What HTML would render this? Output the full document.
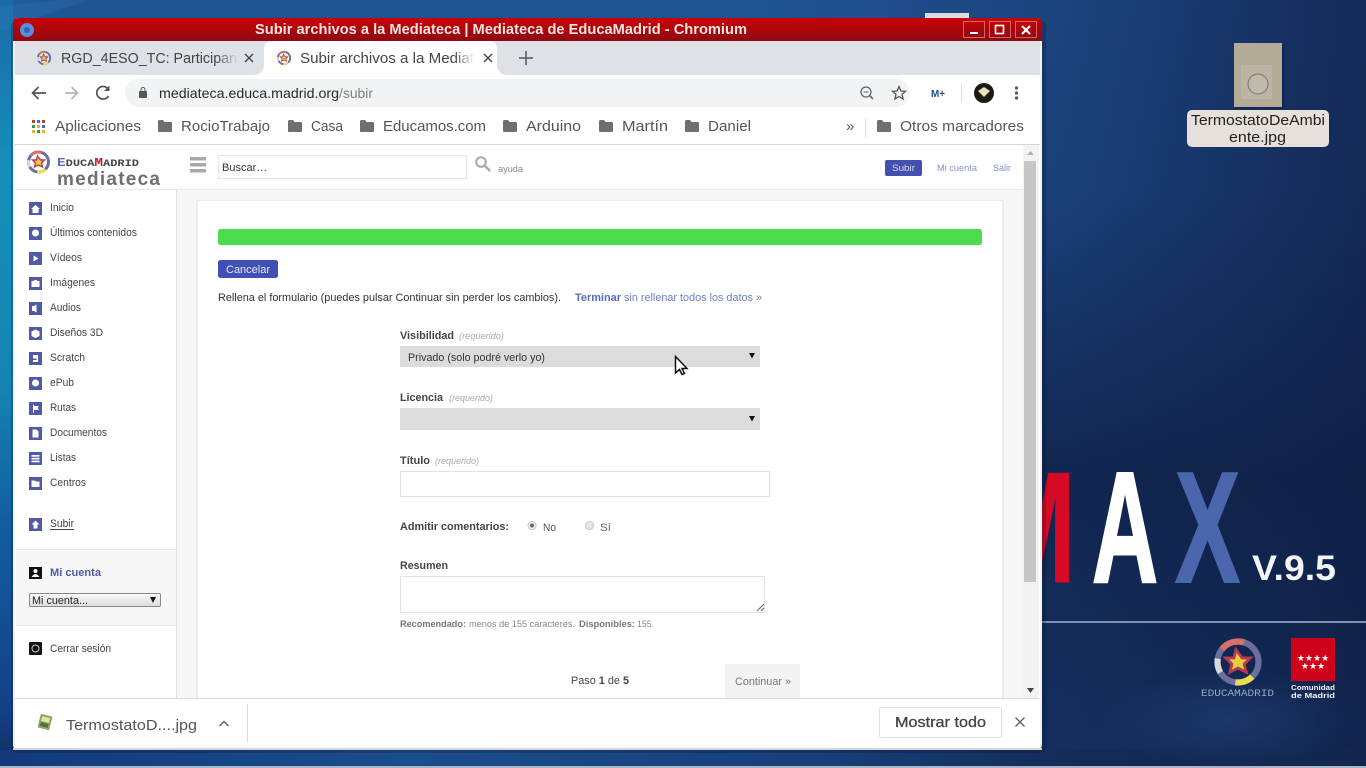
<!DOCTYPE html>
<html lang="es"><head><meta charset="utf-8"><title>Subir archivos a la Mediateca</title>
<style>
html,body{margin:0;padding:0;width:1366px;height:768px;overflow:hidden;background:#14305f}
svg{display:block;filter:blur(.3px)}
text{font-family:"Liberation Sans",sans-serif}
.u{font-size:15px;fill:#555}
.s{font-size:11px;fill:#444}
.f{font-size:11px;fill:#333}
.b{font-weight:bold;fill:#444}
.r{font-size:9.5px;font-style:italic;fill:#aaa}
.n{font-size:9.5px;fill:#888}
</style></head><body>
<svg width="1366" height="768" viewBox="0 0 1366 768" xmlns="http://www.w3.org/2000/svg">
<defs>
<linearGradient id="bg" x1="0" y1="0" x2="1" y2="0"><stop offset="0" stop-color="#1d5f9f"/><stop offset=".05" stop-color="#1f5493"/><stop offset=".55" stop-color="#1f5492"/><stop offset=".78" stop-color="#1c437e"/><stop offset="1" stop-color="#142a58"/></linearGradient>
<linearGradient id="rt" x1="0" y1="0" x2="0" y2="1"><stop offset="0" stop-color="#0e1f44" stop-opacity="0"/><stop offset=".25" stop-color="#0e1f44" stop-opacity=".1"/><stop offset=".62" stop-color="#0e1f44" stop-opacity=".8"/><stop offset="1" stop-color="#0e1f44" stop-opacity=".55"/></linearGradient>
<linearGradient id="lf" x1="0" y1="0" x2="0" y2="1"><stop offset="0" stop-color="#1a6aa8"/><stop offset=".22" stop-color="#1590ba"/><stop offset=".5" stop-color="#1584b2"/><stop offset=".68" stop-color="#125ea0"/><stop offset=".93" stop-color="#143f85"/><stop offset="1" stop-color="#102c5e"/></linearGradient>
<linearGradient id="bt" x1="0" y1="0" x2="1" y2="0"><stop offset="0" stop-color="#123a7a"/><stop offset=".3" stop-color="#1b4e8c"/><stop offset=".6" stop-color="#173f78"/><stop offset=".8" stop-color="#132a55"/><stop offset="1" stop-color="#12264d"/></linearGradient>
<radialGradient id="gl" cx=".5" cy=".5" r=".5"><stop offset="0" stop-color="#24477f" stop-opacity=".5"/><stop offset="1" stop-color="#24477f" stop-opacity="0"/></radialGradient>
<linearGradient id="tt" x1="0" y1="0" x2="0" y2="1"><stop offset="0" stop-color="#cc0006"/><stop offset="1" stop-color="#8e0a12"/></linearGradient>
<linearGradient id="fa" x1="0" y1="0" x2="1" y2="0"><stop offset="0" stop-color="#dee1e6" stop-opacity="0"/><stop offset="1" stop-color="#dee1e6"/></linearGradient>
<linearGradient id="fb" x1="0" y1="0" x2="1" y2="0"><stop offset="0" stop-color="#fff" stop-opacity="0"/><stop offset="1" stop-color="#fff"/></linearGradient>
<linearGradient id="sl" x1="0" y1="0" x2="0" y2="1"><stop offset="0" stop-color="#fafafa"/><stop offset="1" stop-color="#dcdcdc"/></linearGradient>
<g id="ring" fill="none">
<circle r="10" stroke="#6a6f9c" stroke-width="3"/>
<circle r="10" stroke="#e8dc50" stroke-width="3" stroke-dasharray="9 54" stroke-dashoffset="-8"/>
<circle r="10" stroke="#d87068" stroke-width="3" stroke-dasharray="12 51" stroke-dashoffset="-38"/>
<circle r="10" stroke="#d8d8e0" stroke-width="3" stroke-dasharray="7 56" stroke-dashoffset="-26"/>
<path d="M-1-6 2-2 6-2 3 1 4 5 0 3-4 5-3 1-6-2-2-2Z" fill="#e8cf40" stroke="#b53a52" stroke-width="1.4"/>
</g>
<g id="fd"><path d="M0 1.500Q0 0 1.500 0H5L6.500 2H13Q14 2 14 3V11Q14 12 13 12H1Q0 12 0 11Z" fill="#6f6f6f"/></g>
</defs>

<!-- desktop -->
<rect width="1366" height="768" fill="url(#bg)"/>
<rect x="1042" y="0" width="324" height="768" fill="url(#rt)"/>
<rect x="0" y="0" width="13" height="768" fill="url(#lf)"/>
<rect x="0" y="750" width="1366" height="16" fill="url(#bt)"/>
<rect x="0" y="766" width="1366" height="2" fill="#aab5c8"/>
<ellipse cx="1230" cy="720" rx="130" ry="50" fill="url(#gl)"/>
<path d="M0 6 60 0H90L0 30Z" fill="#3d83bd" opacity=".2"/>
<rect x="925" y="13" width="44" height="6" fill="#d9dde5"/>

<!-- wallpaper MAX -->
<text x="988" y="582" font-size="158" font-weight="bold" fill="#d60a24" stroke="#d60a24" stroke-width="1" textLength="88" lengthAdjust="spacingAndGlyphs">M</text>
<text x="1092" y="582" font-size="158" font-weight="bold" fill="#fff" stroke="#fff" stroke-width="2.500" textLength="66" lengthAdjust="spacingAndGlyphs">A</text>
<text x="1175" y="582" font-size="158" font-weight="bold" fill="#4a66ad" stroke="#4a66ad" stroke-width="2" textLength="65" lengthAdjust="spacingAndGlyphs">X</text>
<text x="1252" y="580" font-size="35" font-weight="bold" fill="#f2f4f8" textLength="84" lengthAdjust="spacingAndGlyphs">V.9.5</text>
<rect x="1042" y="621" width="324" height="2" fill="#7f90b2"/>
<use href="#ring" transform="translate(1238 662) scale(2.05)"/>
<text x="1201" y="696" font-size="10" fill="#9aa6c2" textLength="73" lengthAdjust="spacingAndGlyphs" style="font-family:'Liberation Mono',monospace">EDUCAMADRID</text>
<rect x="1291" y="638" width="44" height="43" fill="#d0021b"/>
<text x="1313" y="661" font-size="9" fill="#fff" text-anchor="middle">★★★★</text>
<text x="1313" y="669" font-size="9" fill="#fff" text-anchor="middle">★★★</text>
<text x="1291" y="690" font-size="7.500" font-weight="bold" fill="#f2f4f8" textLength="44" lengthAdjust="spacingAndGlyphs">Comunidad</text>
<text x="1291" y="698" font-size="7.500" font-weight="bold" fill="#f2f4f8" textLength="44" lengthAdjust="spacingAndGlyphs">de Madrid</text>

<!-- desktop file -->
<rect x="1236" y="45" width="48" height="64" fill="#0b1c3b" opacity=".5"/>
<rect x="1234" y="43" width="48" height="64" fill="#b3ab98"/>
<rect x="1241" y="65" width="31" height="34" fill="#bcb5a6"/>
<circle cx="1258" cy="84" r="10" fill="#c0baae" stroke="#77736a"/>
<rect x="1187" y="110" width="142" height="37" rx="5" fill="#e6e0dc"/>
<text x="1191" y="125" font-size="14.500" fill="#222" textLength="134" lengthAdjust="spacingAndGlyphs">TermostatoDeAmbi</text>
<text x="1229" y="142" font-size="14.500" fill="#222" textLength="57" lengthAdjust="spacingAndGlyphs">ente.jpg</text>

<!-- window -->
<rect x="11" y="20" width="1035" height="733" rx="6" fill="#04132c" opacity=".25"/>
<rect x="13" y="18" width="1029" height="732" rx="5" fill="#f4f2f0"/>
<path d="M13 41V23Q13 18 18 18H1037Q1042 18 1042 23V41Z" fill="url(#tt)"/>
<circle cx="27" cy="30" r="7" fill="#5a8fd8"/><circle cx="27" cy="30" r="3" fill="#2f66b8"/>
<text x="255" y="34" font-size="14.500" font-weight="bold" fill="#f3e5df" textLength="492" lengthAdjust="spacingAndGlyphs">Subir archivos a la Mediateca | Mediateca de EducaMadrid - Chromium</text>
<g fill="none" stroke="#c86a6a"><rect x="963.500" y="21.500" width="21" height="16"/><rect x="989.500" y="21.500" width="21" height="16"/><rect x="1015.500" y="21.500" width="21" height="16"/></g>
<rect x="970" y="32" width="8" height="2" fill="#fff"/>
<rect x="995.500" y="25.500" width="8" height="8" fill="none" stroke="#fff" stroke-width="1.600"/>
<path d="M1022 26 1030 34M1030 26 1022 34" stroke="#fff" stroke-width="2.200"/>

<!-- tabs -->
<rect x="15" y="41" width="1025" height="34" fill="#dee1e6"/>
<path d="M254 75Q262 75 264 66V50Q264 41 272 41H489Q497 41 497 50V66Q499 75 507 75Z" fill="#fff"/>
<use href="#ring" transform="translate(44 58) scale(.62)"/>
<text x="61" y="63" font-size="14.500" fill="#444" textLength="176" lengthAdjust="spacingAndGlyphs">RGD_4ESO_TC: Participan</text>
<rect x="216" y="46" width="22" height="24" fill="url(#fa)"/>
<path d="M245 54 253 62M253 54 245 62" stroke="#444" stroke-width="1.400"/>
<use href="#ring" transform="translate(284 58) scale(.62)"/>
<text x="300" y="63" font-size="14.500" fill="#444" textLength="174" lengthAdjust="spacingAndGlyphs">Subir archivos a la Mediat</text>
<rect x="454" y="46" width="20" height="24" fill="url(#fb)"/>
<path d="M484 54 492 62M492 54 484 62" stroke="#444" stroke-width="1.400"/>
<path d="M526 51V65M519 58H533" stroke="#555" stroke-width="1.500"/>

<!-- toolbar -->
<rect x="15" y="75" width="1025" height="70" fill="#fff"/>
<rect x="125" y="79" width="785" height="28" rx="14" fill="#f1f3f4"/>
<path d="M46 93H33M38.500 87 32.500 93 38.500 99" fill="none" stroke="#555" stroke-width="1.700"/>
<path d="M78 93H65M71.500 87 77.500 93 71.500 99" fill="none" stroke="#b5b5b5" stroke-width="1.700"/>
<path d="M108.500 96A6.300 6.300 0 1 1 108.500 89.500" fill="none" stroke="#555" stroke-width="1.700"/><path d="M109.500 85.500V91H104Z" fill="#555"/>
<rect x="139" y="91" width="8" height="7" rx="1" fill="#555"/><path d="M141 91V89.500A2 2 0 0 1 145 89.500V91" fill="none" stroke="#555"/>
<text x="159" y="98" font-size="14" fill="#2a2a2a" textLength="180" lengthAdjust="spacingAndGlyphs">mediateca.educa.madrid.org</text>
<text x="339" y="98" font-size="14" fill="#808080" textLength="34" lengthAdjust="spacingAndGlyphs">/subir</text>
<circle cx="866" cy="92" r="5" fill="none" stroke="#666" stroke-width="1.300"/><path d="M870 96 873 99" stroke="#666" stroke-width="1.600"/><path d="M863.500 92H868.500" stroke="#666"/>
<path d="M899 86.500 900.900 91 905.500 91.300 902 94.300 903.100 99 899 96.500 894.900 99 896 94.300 892.500 91.300 897.100 91Z" fill="none" stroke="#555" stroke-width="1.300"/>
<text x="931" y="97" font-size="10" font-weight="bold" fill="#1c4f8a" textLength="14" lengthAdjust="spacingAndGlyphs">M+</text>
<rect x="961" y="84" width="1" height="18" fill="#dfe1e5"/>
<circle cx="984" cy="93" r="10" fill="#1b1a14"/><path d="M978 91 984 87 990 91 984 97Z" fill="#e6e2b8"/>
<g fill="#555"><circle cx="1016.500" cy="88" r="1.600"/><circle cx="1016.500" cy="93" r="1.600"/><circle cx="1016.500" cy="98" r="1.600"/></g>

<!-- bookmarks -->
<g><rect x="32" y="120" width="3" height="3" fill="#c5392f"/><rect x="37" y="120" width="3" height="3" fill="#3a6fd8"/><rect x="42" y="120" width="3" height="3" fill="#c5392f"/><rect x="32" y="125" width="3" height="3" fill="#2e9e4a"/><rect x="37" y="125" width="3" height="3" fill="#e5b820"/><rect x="42" y="125" width="3" height="3" fill="#3a6fd8"/><rect x="32" y="130" width="3" height="3" fill="#e5b820"/><rect x="37" y="130" width="3" height="3" fill="#2e9e4a"/><rect x="42" y="130" width="3" height="3" fill="#e5b820"/></g>
<text class="u" x="55" y="131" textLength="86" lengthAdjust="spacingAndGlyphs">Aplicaciones</text>
<use href="#fd" x="158" y="120"/><text class="u" x="181" y="131" textLength="89" lengthAdjust="spacingAndGlyphs">RocioTrabajo</text>
<use href="#fd" x="288" y="120"/><text class="u" x="311" y="131" textLength="32" lengthAdjust="spacingAndGlyphs">Casa</text>
<use href="#fd" x="360" y="120"/><text class="u" x="383" y="131" textLength="103" lengthAdjust="spacingAndGlyphs">Educamos.com</text>
<use href="#fd" x="503" y="120"/><text class="u" x="526" y="131" textLength="55" lengthAdjust="spacingAndGlyphs">Arduino</text>
<use href="#fd" x="599" y="120"/><text class="u" x="622" y="131" textLength="46" lengthAdjust="spacingAndGlyphs">Martín</text>
<use href="#fd" x="685" y="120"/><text class="u" x="708" y="131" textLength="43" lengthAdjust="spacingAndGlyphs">Daniel</text>
<text x="846" y="131" font-size="15" fill="#555">»</text>
<rect x="865" y="119" width="1" height="18" fill="#dfe1e5"/>
<use href="#fd" x="877" y="120"/><text class="u" x="900" y="131" textLength="124" lengthAdjust="spacingAndGlyphs">Otros marcadores</text>
<rect x="15" y="144" width="1025" height="1" fill="#d4d6da"/>

<!-- page -->
<rect x="15" y="145" width="1025" height="553" fill="#fff"/>
<rect x="15" y="189" width="1008" height="1" fill="#e8e8e8"/>
<rect x="177" y="190" width="846" height="508" fill="#f6f6f6"/>
<rect x="176" y="190" width="1" height="508" fill="#e3e3e3"/>
<rect x="196" y="200" width="808" height="498" fill="#ececec"/>
<rect x="198" y="201" width="804" height="497" fill="#fff"/>
<rect x="1023" y="145" width="16" height="553" fill="#f3f3f3"/>
<rect x="1024" y="161" width="12" height="421" fill="#c6c6c6"/>
<path d="M1027 155 1030.500 151 1034 155Z" fill="#b0b0b0"/><path d="M1027 688 1030.500 693 1034 688Z" fill="#444"/>

<!-- header -->
<use href="#ring" transform="translate(38.500 162) scale(1)"/>
<text x="57" y="166" font-size="10" fill="#444" font-weight="bold" textLength="82" lengthAdjust="spacingAndGlyphs" style="font-family:'Liberation Mono',monospace"><tspan fill="#5a6bc0" font-size="12">E</tspan>DUCA<tspan fill="#c5182f" font-size="12">M</tspan>ADRID</text>
<text x="57" y="185" font-size="19" font-weight="bold" fill="#707070" textLength="103" lengthAdjust="spacing">mediateca</text>
<g fill="#a8a8a8"><rect x="190" y="157" width="16" height="3.500"/><rect x="190" y="163" width="16" height="3.500"/><rect x="190" y="169" width="16" height="3.500"/></g>
<rect x="218.500" y="155.500" width="248" height="23" fill="#fff" stroke="#e6e6e6"/>
<text x="222" y="171" font-size="11" fill="#333">Buscar…</text>
<circle cx="481" cy="162" r="4.800" fill="none" stroke="#a9a9a9" stroke-width="2"/><path d="M485 166 490 171" stroke="#a9a9a9" stroke-width="2.500"/>
<text x="498" y="172" font-size="9.500" fill="#888" textLength="25" lengthAdjust="spacingAndGlyphs">ayuda</text>
<rect x="885" y="160" width="37" height="16" rx="2" fill="#4450b0"/>
<text x="892" y="171" font-size="9.500" fill="#d8dcf4" textLength="23" lengthAdjust="spacingAndGlyphs">Subir</text>
<text x="937" y="171" font-size="9.500" fill="#8a90cc" textLength="40" lengthAdjust="spacingAndGlyphs">Mi cuenta</text>
<text x="993" y="171" font-size="9.500" fill="#8a90cc" textLength="18" lengthAdjust="spacingAndGlyphs">Salir</text>

<!-- sidebar -->
<g fill="#4f5aa6">
<rect x="29" y="202" width="13" height="13"/><rect x="29" y="227" width="13" height="13"/><rect x="29" y="252" width="13" height="13"/><rect x="29" y="277" width="13" height="13"/><rect x="29" y="302" width="13" height="13"/><rect x="29" y="327" width="13" height="13"/><rect x="29" y="352" width="13" height="13"/><rect x="29" y="377" width="13" height="13"/><rect x="29" y="402" width="13" height="13"/><rect x="29" y="427" width="13" height="13"/><rect x="29" y="452" width="13" height="13"/><rect x="29" y="477" width="13" height="13"/><rect x="29" y="518" width="13" height="13"/>
</g>
<g fill="#fff">
<path d="M35.500 205 40 209H38.500V213H32.500V209H31Z"/>
<circle cx="35.500" cy="233" r="3.500"/>
<path d="M33.500 255.500 38.500 258.500 33.500 261.500Z"/>
<path d="M31.500 281H33.500L34.500 280H36.500L37.500 281H39.500V287H31.500Z"/>
<path d="M32 306H34L36.500 304.500V312.500L34 311H32Z"/>
<path d="M35.500 329.500 39.500 331.500V336L35.500 338 31.500 336V331.500Z"/>
<path d="M33 355H38V362H33V360H36.500V358.500H33Z"/>
<circle cx="35.500" cy="383" r="3.500"/>
<path d="M33 404.500H34V406H39L37.500 408 39 410H34V413H33Z"/>
<path d="M32.500 429.500H36.500L38.500 431.500V437.500H32.500Z"/>
<rect x="31.500" y="455" width="8" height="1.700"/><rect x="31.500" y="457.800" width="8" height="1.700"/><rect x="31.500" y="460.600" width="8" height="1.700"/>
<path d="M31.500 480.500H35L36 481.500H39.500V487H31.500Z"/>
<path d="M35.500 520.500 39.500 524.500H37.500V528.500H33.500V524.500H31.500Z"/>
</g>
<text class="s" x="50" y="211" textLength="24" lengthAdjust="spacingAndGlyphs">Inicio</text>
<text class="s" x="50" y="236" textLength="87" lengthAdjust="spacingAndGlyphs">Últimos contenidos</text>
<text class="s" x="50" y="261" textLength="32" lengthAdjust="spacingAndGlyphs">Vídeos</text>
<text class="s" x="50" y="286" textLength="45" lengthAdjust="spacingAndGlyphs">Imágenes</text>
<text class="s" x="50" y="311" textLength="31" lengthAdjust="spacingAndGlyphs">Audios</text>
<text class="s" x="50" y="336" textLength="53" lengthAdjust="spacingAndGlyphs">Diseños 3D</text>
<text class="s" x="50" y="361" textLength="35" lengthAdjust="spacingAndGlyphs">Scratch</text>
<text class="s" x="50" y="386" textLength="24" lengthAdjust="spacingAndGlyphs">ePub</text>
<text class="s" x="50" y="411" textLength="26" lengthAdjust="spacingAndGlyphs">Rutas</text>
<text class="s" x="50" y="436" textLength="57" lengthAdjust="spacingAndGlyphs">Documentos</text>
<text class="s" x="50" y="461" textLength="26" lengthAdjust="spacingAndGlyphs">Listas</text>
<text class="s" x="50" y="486" textLength="36" lengthAdjust="spacingAndGlyphs">Centros</text>
<text class="s" x="50" y="527" textLength="24" lengthAdjust="spacingAndGlyphs">Subir</text>
<rect x="50" y="529" width="24" height="1" fill="#444"/>
<rect x="16" y="549" width="160" height="77" fill="#f7f7f7"/>
<rect x="16" y="549" width="160" height="1" fill="#e6e6e6"/><rect x="16" y="625" width="160" height="1" fill="#e6e6e6"/>
<rect x="29" y="567" width="13" height="12" fill="#111"/><circle cx="35.500" cy="571" r="2" fill="#fff"/><path d="M31.500 577Q35.500 571 39.500 577Z" fill="#fff"/>
<text x="50" y="576" font-size="11" font-weight="bold" fill="#4f5aa6" textLength="51" lengthAdjust="spacingAndGlyphs">Mi cuenta</text>
<rect x="29.500" y="593.500" width="131" height="13" rx="1.500" fill="url(#sl)" stroke="#8a8a8a"/>
<text x="32" y="604" font-size="11" fill="#222" textLength="56" lengthAdjust="spacingAndGlyphs">Mi cuenta...</text>
<path d="M150 597H156L153 603Z" fill="#111"/>
<rect x="29" y="642" width="13" height="13" rx="1" fill="#111"/><circle cx="35.500" cy="648.500" r="3.500" fill="none" stroke="#ccc"/>
<text class="s" x="50" y="652" textLength="61" lengthAdjust="spacingAndGlyphs">Cerrar sesión</text>

<!-- content -->
<rect x="218" y="229" width="764" height="16" rx="2.500" fill="#4cdb4c"/>
<rect x="218" y="260" width="60" height="18" rx="2.500" fill="#4150b4"/>
<text x="226" y="273" font-size="11" fill="#e6e9f8" textLength="44" lengthAdjust="spacingAndGlyphs">Cancelar</text>
<text class="f" x="218" y="301" textLength="343" lengthAdjust="spacingAndGlyphs">Rellena el formulario (puedes pulsar Continuar sin perder los cambios).</text>
<text x="575" y="301" font-size="11" font-weight="bold" fill="#5a6bc0" textLength="46" lengthAdjust="spacingAndGlyphs">Terminar</text>
<text x="624" y="301" font-size="11" fill="#6f7cc8" textLength="138" lengthAdjust="spacingAndGlyphs">sin rellenar todos los datos »</text>

<text class="f b" x="400" y="339" textLength="54" lengthAdjust="spacingAndGlyphs">Visibilidad</text>
<text class="r" x="459" y="339" textLength="45" lengthAdjust="spacingAndGlyphs">(requerido)</text>
<rect x="400" y="346" width="360" height="21" fill="#dcdcdc"/>
<text x="408" y="361" font-size="11" fill="#333" textLength="137" lengthAdjust="spacingAndGlyphs">Privado (solo podré verlo yo)</text>
<path d="M749 353H755L752 358.500Z" fill="#111"/>

<text class="f b" x="400" y="401" textLength="43" lengthAdjust="spacingAndGlyphs">Licencia</text>
<text class="r" x="449" y="401" textLength="44" lengthAdjust="spacingAndGlyphs">(requerido)</text>
<rect x="400" y="408" width="360" height="22" fill="#dcdcdc"/>
<path d="M749 416H755L752 421.500Z" fill="#111"/>

<text class="f b" x="400" y="464" textLength="30" lengthAdjust="spacingAndGlyphs">Título</text>
<text class="r" x="435" y="464" textLength="44" lengthAdjust="spacingAndGlyphs">(requerido)</text>
<rect x="400.500" y="471.500" width="369" height="25" fill="#fff" stroke="#e2e2e2"/>

<text class="f b" x="400" y="530" textLength="109" lengthAdjust="spacingAndGlyphs">Admitir comentarios:</text>
<circle cx="532" cy="525.500" r="4" fill="#f0f0f0" stroke="#c4c4c4"/><circle cx="532" cy="525.500" r="2" fill="#666"/>
<text x="543" y="531" font-size="11" fill="#555" textLength="13" lengthAdjust="spacingAndGlyphs">No</text>
<circle cx="589.500" cy="525.500" r="4" fill="#e6e6e6" stroke="#c4c4c4"/>
<text x="600" y="531" font-size="11" fill="#666" textLength="11" lengthAdjust="spacingAndGlyphs">Sí</text>

<text class="f b" x="400" y="569" textLength="48" lengthAdjust="spacingAndGlyphs">Resumen</text>
<rect x="400.500" y="576.500" width="364" height="36" fill="#fff" stroke="#e2e2e2"/>
<path d="M757 611 764 604M761 611 764 608" stroke="#666"/>
<text class="n b" x="400" y="627" textLength="66" lengthAdjust="spacingAndGlyphs" style="fill:#777">Recomendado:</text>
<text class="n" x="469" y="627" textLength="106" lengthAdjust="spacingAndGlyphs">menos de 155 caracteres.</text>
<text class="n b" x="579" y="627" textLength="56" lengthAdjust="spacingAndGlyphs" style="fill:#777">Disponibles:</text>
<text class="n" x="637" y="627" textLength="17" lengthAdjust="spacingAndGlyphs">155.</text>

<text x="571" y="684" font-size="11" fill="#444" textLength="58" lengthAdjust="spacingAndGlyphs">Paso <tspan font-weight="bold">1</tspan> de <tspan font-weight="bold">5</tspan></text>
<rect x="725" y="664" width="75" height="34" fill="#f3f3f3"/>
<text x="735" y="685" font-size="11" fill="#777" textLength="56" lengthAdjust="spacingAndGlyphs">Continuar »</text>

<!-- download bar -->
<rect x="15" y="698" width="1025" height="50" fill="#fff"/>
<rect x="15" y="698" width="1025" height="1" fill="#d8d8d8"/>
<rect x="13" y="748" width="1029" height="2" fill="#d5d5d5"/>
<g transform="rotate(14 45 722)"><rect x="39" y="715" width="12" height="14" rx="1" fill="#8aa860"/><rect x="41" y="717" width="8" height="5" fill="#d8e8a8"/><rect x="41" y="723" width="8" height="4" fill="#55703a"/></g>
<text x="66" y="730" font-size="14.500" fill="#555" textLength="131" lengthAdjust="spacingAndGlyphs">TermostatoD....jpg</text>
<path d="M219.500 726 224 721.500 228.500 726" fill="none" stroke="#666" stroke-width="1.500"/>
<rect x="247" y="704" width="1" height="38" fill="#dcdcdc"/>
<rect x="879.500" y="707.500" width="122" height="30" rx="2" fill="#fff" stroke="#e0e0e0"/>
<text x="895" y="727" font-size="14.500" fill="#444" stroke="#444" stroke-width=".3" textLength="91" lengthAdjust="spacingAndGlyphs">Mostrar todo</text>
<path d="M1015.500 717.500 1024.500 726.500M1024.500 717.500 1015.500 726.500" stroke="#666" stroke-width="1.500"/>

<!-- cursor -->
<path d="M675.500 356.500V373L679.500 369.500 682 374.500 684.500 373.500 682 368.500H687Z" fill="#fff" stroke="#111" stroke-width="1.500"/>
</svg>
</body></html>
